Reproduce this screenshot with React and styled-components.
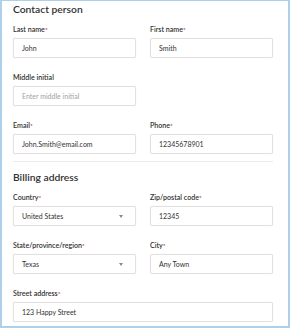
import styled, { createGlobalStyle } from 'styled-components';

const GlobalStyle = createGlobalStyle`
  * {
    box-sizing: border-box;
  }

  body {
    margin: 0;
    background: #fff;
    font-family: Lato, "Open Sans", sans-serif;
  }
`;

const contactRows = [
  [
    { label: 'Last name', required: true, value: 'John' },
    { label: 'First name', required: true, value: 'Smith' },
  ],
  [{ label: 'Middle initial', placeholder: 'Enter middle initial' }],
  [
    { label: 'Email', required: true, value: 'John.Smith@email.com' },
    { label: 'Phone', required: true, value: '12345678901' },
  ],
];

const billingRows = [
  [
    { label: 'Country', required: true, value: 'United States', select: true },
    { label: 'Zip/postal code', required: true, value: '12345' },
  ],
  [
    { label: 'State/province/region', required: true, value: 'Texas', select: true },
    { label: 'City', required: true, value: 'Any Town' },
  ],
  [{ label: 'Street address', required: true, value: '123 Happy Street', full: true }],
];

const FormField = ({ field }) => (
  <Field $full={field.full}>
    <Label>
      {field.label}
      {field.required && <Required>*</Required>}
    </Label>
    {field.select ? (
      <SelectBox>
        <span>{field.value}</span>
        <Caret />
      </SelectBox>
    ) : (
      <TextInput
        readOnly
        defaultValue={field.value}
        placeholder={field.placeholder}
      />
    )}
  </Field>
);

const FieldRows = ({ rows }) => (
  <Rows>
    {rows.map((row, i) => (
      <Row key={i}>
        {row.map(field => (
          <FormField key={field.label} field={field} />
        ))}
      </Row>
    ))}
  </Rows>
);

const App = () => {
  return (
    <Frame>
      <GlobalStyle />
      <Heading>Contact person</Heading>
      <FieldRows rows={contactRows} />
      <Divider />
      <Heading>Billing address</Heading>
      <FieldRows rows={billingRows} />
    </Frame>
  );
};

export default App;

const Frame = styled.div`
  width: 290px;
  height: 328px;
  padding: 0 15px 0 11px;
  background: #fff;
  border: 2px solid #b0d0ea;
  border-top-width: 1px;
  overflow: hidden;
`;

const Heading = styled.h2`
  margin: 0 0 7px;
  height: 16px;
  font-size: 10.3px;
  line-height: 16px;
  font-weight: 600;
  color: #323130;
`;

const Rows = styled.div`
  display: flex;
  flex-direction: column;
  gap: 14px;
`;

const Row = styled.div`
  display: grid;
  grid-template-columns: 123px 123px;
  column-gap: 14px;
`;

const Field = styled.div`
  display: flex;
  flex-direction: column;
  grid-column: ${props => (props.$full ? '1 / -1' : 'auto')};
`;

const Label = styled.label`
  height: 11px;
  margin-bottom: 3px;
  font-size: 7.1px;
  line-height: 11px;
  font-weight: 600;
  color: #323130;
  white-space: nowrap;
`;

const Required = styled.span`
  color: #c4314b;
  font-size: 6.5px;
`;

const boxStyle = `
  height: 20px;
  width: 100%;
  padding: 0 8px;
  border: 1px solid #e3e1df;
  border-radius: 2px;
  box-shadow: 0 0 1px rgba(0, 0, 0, 0.12);
  background: #fff;
  font-family: Lato, "Open Sans", sans-serif;
  font-size: 7px;
  color: #323130;
`;

const TextInput = styled.input`
  ${boxStyle}
  outline: none;

  &::placeholder {
    color: #a19f9d;
  }
`;

const SelectBox = styled.div`
  ${boxStyle}
  display: flex;
  align-items: center;
  justify-content: space-between;
  padding-right: 12px;
`;

const Caret = styled.span`
  width: 0;
  height: 0;
  border-left: 2.5px solid transparent;
  border-right: 2.5px solid transparent;
  border-top: 3px solid #8a8886;
`;

const Divider = styled.hr`
  margin: 7px 0 7px;
  width: 260px;
  border: none;
  border-top: 1px solid #edebe9;
`;
